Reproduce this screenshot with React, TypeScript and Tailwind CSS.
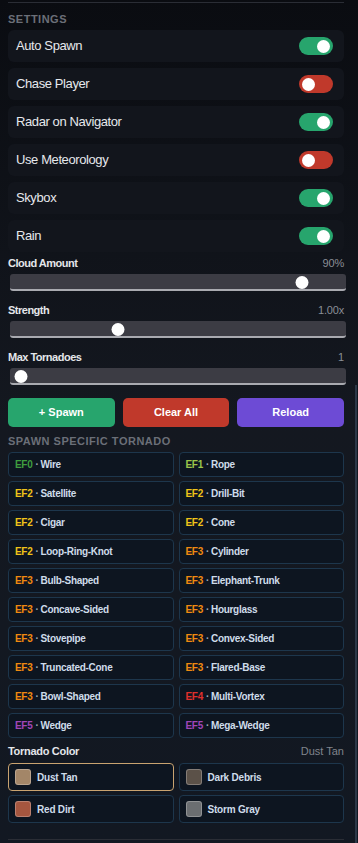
import React, { useState } from 'react';

const toggleDefaults = [
  { key: 'autoSpawn', label: 'Auto Spawn', on: true },
  { key: 'chasePlayer', label: 'Chase Player', on: false },
  { key: 'radar', label: 'Radar on Navigator', on: true },
  { key: 'meteorology', label: 'Use Meteorology', on: false },
  { key: 'skybox', label: 'Skybox', on: true },
  { key: 'rain', label: 'Rain', on: true },
];

const efColors: Record<string, string> = {
  EF0: 'text-[#3f9e3f]',
  EF1: 'text-[#9cc54a]',
  EF2: 'text-[#f0c419]',
  EF3: 'text-[#f08a10]',
  EF4: 'text-[#e0302c]',
  EF5: 'text-[#a146b8]',
};

const tornadoes = [
  ['EF0', 'Wire'],
  ['EF1', 'Rope'],
  ['EF2', 'Satellite'],
  ['EF2', 'Drill-Bit'],
  ['EF2', 'Cigar'],
  ['EF2', 'Cone'],
  ['EF2', 'Loop-Ring-Knot'],
  ['EF3', 'Cylinder'],
  ['EF3', 'Bulb-Shaped'],
  ['EF3', 'Elephant-Trunk'],
  ['EF3', 'Concave-Sided'],
  ['EF3', 'Hourglass'],
  ['EF3', 'Stovepipe'],
  ['EF3', 'Convex-Sided'],
  ['EF3', 'Truncated-Cone'],
  ['EF3', 'Flared-Base'],
  ['EF3', 'Bowl-Shaped'],
  ['EF4', 'Multi-Vortex'],
  ['EF5', 'Wedge'],
  ['EF5', 'Mega-Wedge'],
];

const tornadoColors = [
  { name: 'Dust Tan', swatch: 'bg-[#a38668]' },
  { name: 'Dark Debris', swatch: 'bg-[#5b5148]' },
  { name: 'Red Dirt', swatch: 'bg-[#a5563f]' },
  { name: 'Storm Gray', swatch: 'bg-[#6b6e71]' },
];

const Toggle: React.FC<{ on: boolean; onClick: () => void }> = ({ on, onClick }) => (
  <button
    type="button"
    onClick={onClick}
    className={`flex h-[18px] w-[34px] items-center rounded-full px-[3px] ${on ? 'justify-end bg-[#27a56d]' : 'justify-start bg-[#c0392b]'}`}
  >
    <span className="block h-[13px] w-[13px] rounded-full bg-white" />
  </button>
);

const Slider: React.FC<{ label: string; value: string; percent: number }> = ({ label, value, percent }) => (
  <div>
    <div className="flex items-center justify-between text-[11px] leading-[13px]">
      <span className="font-bold tracking-[-0.5px] text-[#e4e6ea]">{label}</span>
      <span className="tracking-[-0.2px] text-[#8a8e96]">{value}</span>
    </div>
    <div className="relative ml-[2px] mt-[4px] h-[17px] w-[336px] rounded-[3px] border-b-2 border-[#a9aab0] bg-[#3c3c44]">
      <span
        className="absolute top-[2px] h-[13px] w-[13px] -translate-x-1/2 rounded-full bg-white"
        style={{ left: `${percent}%` }}
      />
    </div>
  </div>
);

export default function App() {
  const [toggles, setToggles] = useState<Record<string, boolean>>(
    Object.fromEntries(toggleDefaults.map(t => [t.key, t.on]))
  );
  const [color, setColor] = useState('Dust Tan');

  return (
    <div className="flex h-[843px] w-[358px] overflow-hidden bg-gradient-to-b from-[#0a0c11] via-[#141820] to-[#121822] font-['Liberation_Sans',Arial,sans-serif]">
      <div className="w-[354px] shrink-0 pl-2 pr-[10px]">
        <div className="mt-[2px] h-px bg-[#2a2d35]" />

        <div className="mt-[10px] text-[11px] font-bold leading-[13px] tracking-[0.5px] text-[#6b6f78]">SETTINGS</div>

        <div className="mt-[4px] flex flex-col gap-[6px]">
          {toggleDefaults.map(t => (
            <div key={t.key} className="flex h-[32px] items-center justify-between rounded-[6px] bg-[#12151c] pl-2 pr-[11px]">
              <span className="text-[13px] tracking-[-0.4px] text-[#e6e8ec]">{t.label}</span>
              <Toggle on={toggles[t.key]} onClick={() => setToggles(prev => ({ ...prev, [t.key]: !prev[t.key] }))} />
            </div>
          ))}
        </div>

        <div className="mt-[5px] flex flex-col gap-[13px]">
          <Slider label="Cloud Amount" value="90%" percent={87} />
          <Slider label="Strength" value="1.00x" percent={32} />
          <Slider label="Max Tornadoes" value="1" percent={3.3} />
        </div>

        <div className="mt-[13px] grid grid-cols-3 gap-2">
          <button type="button" className="h-[29px] rounded-[5px] bg-[#27a56d] text-[11px] font-bold text-white">+ Spawn</button>
          <button type="button" className="h-[29px] rounded-[5px] bg-[#c0392b] text-[11px] font-bold text-white">Clear All</button>
          <button type="button" className="h-[29px] rounded-[5px] bg-[#6d4bd5] text-[11px] font-bold text-white">Reload</button>
        </div>

        <div className="mt-[8px] text-[11px] font-bold leading-[13px] tracking-[0.5px] text-[#6b6f78]">SPAWN SPECIFIC TORNADO</div>

        <div className="mt-[4px] grid grid-cols-2 gap-x-[5px] gap-y-[4px]">
          {tornadoes.map(([ef, name]) => (
            <button
              key={name}
              type="button"
              className="flex h-[25px] items-center rounded-[4px] border border-[#1d364c] bg-[#0d1520] px-[6px] text-left text-[10px] font-bold tracking-[-0.3px]"
            >
              <span className={efColors[ef]}>{ef}</span>
              <span className="ml-[3px] text-[#9aa8b8]">·</span>
              <span className="ml-[2px] text-[#cfdcea]">{name}</span>
            </button>
          ))}
        </div>

        <div className="mt-[6px] flex items-center justify-between text-[11px] leading-[14px]">
          <span className="font-bold tracking-[-0.3px] text-[#e4e6ea]">Tornado Color</span>
          <span className="text-[#80848c]">{color}</span>
        </div>

        <div className="mt-[5px] grid grid-cols-2 gap-x-[5px] gap-y-[4px]">
          {tornadoColors.map(c => (
            <button
              key={c.name}
              type="button"
              onClick={() => setColor(c.name)}
              className={`flex h-[28px] items-center gap-[6px] rounded-[4px] border bg-[#0d1520] px-[6px] text-[10px] font-bold tracking-[-0.2px] text-[#cfdcea] ${color === c.name ? 'border-[#c9a370]' : 'border-[#1d364c]'}`}
            >
              <span className={`h-[16px] w-[16px] rounded-[3px] border border-[#ffffff40] ${c.swatch}`} />
              {c.name}
            </button>
          ))}
        </div>

        <div className="mt-[16px] h-px bg-[#2a2d35]" />
      </div>

      <div className="w-[4px] shrink-0">
        <div className="ml-[1px] mt-[385px] h-[458px] w-[2px] bg-[#2c3848]" />
      </div>
    </div>
  );
}
